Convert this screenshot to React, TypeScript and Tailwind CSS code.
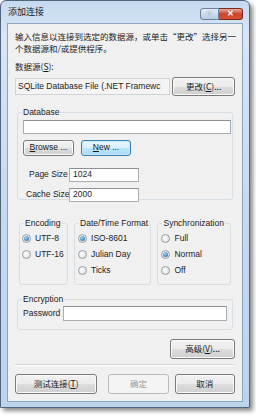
import type { ReactNode } from "react";

const CN = { fontFamily: '"Noto Sans CJK SC", "Liberation Sans", sans-serif' };
const UI = { fontFamily: '"Liberation Sans", "Noto Sans", sans-serif' };

function Btn({
  children,
  className = "",
  focused = false,
  disabled = false,
}: {
  children: ReactNode;
  className?: string;
  focused?: boolean;
  disabled?: boolean;
}) {
  const look = disabled
    ? "border-[#b8bcbf] bg-[#f4f4f4] text-[#9a9a9a]"
    : focused
      ? "border-[#3c7fb1] bg-[linear-gradient(#eaf6fd_0%,#d9f0fc_50%,#bee6fd_51%,#a7d9f5_100%)] text-[#1a1a1a] shadow-[inset_0_0_0_1px_#c9e8fb]"
      : "border-[#7a7a7a] bg-[linear-gradient(#f2f2f2_0%,#ebebeb_50%,#dddddd_51%,#cfcfcf_100%)] text-[#1a1a1a] shadow-[inset_0_0_0_1px_#fbfbfb]";
  return (
    <div
      className={`flex items-center justify-center whitespace-nowrap rounded-[3px] border text-[8.5px] ${look} ${className}`}
    >
      {children}
    </div>
  );
}

function Field({ className = "", children }: { className?: string; children?: ReactNode }) {
  return (
    <div
      className={`flex items-center border border-[#abadb3] border-t-[#8e9096] bg-white px-[3px] text-[8.5px] text-[#222] ${className}`}
    >
      {children}
    </div>
  );
}

function Group({
  title,
  className = "",
  children,
}: {
  title: string;
  className?: string;
  children: ReactNode;
}) {
  return (
    <div className={`relative rounded-[3px] border border-[#d5dfe5] ${className}`}>
      <span className="absolute -top-[7px] left-[4px] whitespace-nowrap bg-[#f0f0f0] px-[1px] text-[8.5px] leading-[12px] text-[#222]">
        {title}
      </span>
      {children}
    </div>
  );
}

function Radio({ label, checked = false }: { label: string; checked?: boolean }) {
  return (
    <div className="flex h-[16px] items-center gap-[4px] whitespace-nowrap text-[8.5px] text-[#222]">
      <div className="flex h-[9px] w-[9px] shrink-0 items-center justify-center rounded-full border border-[#9a9ea3] bg-[radial-gradient(circle_at_40%_40%,#ffffff,#d4d6d9)]">
        {checked && (
          <div className="h-[5px] w-[5px] rounded-full bg-[radial-gradient(circle_at_40%_35%,#9fd6f8,#1c5c9a)]" />
        )}
      </div>
      <span>{label}</span>
    </div>
  );
}

export default function App() {
  return (
    <div className="h-[415px] w-[256px] bg-white" style={UI}>
      <div className="flex h-[408px] w-[250px] flex-col rounded-t-[6px] border border-[#51647d] bg-[linear-gradient(#c5d9ef_0%,#d8e6f5_8%,#c9dcf0_40%,#bcd3ec_100%)] px-[6px] pb-[5px] shadow-[3px_3px_4px_rgba(0,0,0,0.45)]">
        {/* title bar */}
        <div className="flex h-[22px] items-start justify-between">
          <span className="pl-[1px] pt-[6px] text-[9px] leading-[10px] text-[#1b1b1b]" style={CN}>
            添加连接
          </span>
          <div className="flex pt-[7px]">
            <div className="flex h-[12px] w-[19px] items-center justify-center rounded-l-[3px] border border-[#6d7f99] bg-[linear-gradient(#e3ecf6,#b7cbe3)] text-[8px] font-bold leading-none text-[#eef3f9] [text-shadow:0_0_1px_#3d5676]">
              ?
            </div>
            <div className="flex h-[12px] w-[24px] items-center justify-center rounded-r-[3px] border border-l-0 border-[#7b2a22] bg-[linear-gradient(#eaa99c,#c9452f_50%,#d9502f)] text-[8px] font-bold leading-none text-white">
              ✕
            </div>
          </div>
        </div>

        {/* client area */}
        <div className="flex flex-1 flex-col border border-[#8da3bf] bg-[#f0f0f0] px-[7px] pt-[6px]">
          <p className="whitespace-nowrap text-[8.5px] leading-[12px] text-[#1b1b1b]" style={CN}>
            输入信息以连接到选定的数据源，或单击“更改”选择另一
            <br />
            个数据源和/或提供程序。
          </p>
          <div className="mt-[6px] text-[8.5px] text-[#1b1b1b]" style={CN}>
            数据源(<u>S</u>):
          </div>
          <div className="mt-[4px] flex items-center gap-[2px]">
            <div className="flex h-[17px] w-[156px] items-center overflow-hidden whitespace-nowrap border border-[#d0d3d7] bg-[#f4f4f4] px-[2px] text-[8.5px] text-[#222]">
              SQLite Database File (.NET Framewc
            </div>
            <Btn className="h-[19px] w-[63px]">
              <span style={CN}>
                更改(<u>C</u>)...
              </span>
            </Btn>
          </div>

          {/* Database group */}
          <Group title="Database" className="mx-[2px] mt-[16px] h-[88px] px-[5px] pt-[7px]">
            <Field className="h-[14px] w-[208px]" />
            <div className="mt-[6px] flex gap-[7px]">
              <Btn className="h-[16px] w-[51px]">
                <span>
                  <u>B</u>rowse ...
                </span>
              </Btn>
              <Btn className="h-[16px] w-[50px]" focused>
                <span>
                  <u>N</u>ew ...
                </span>
              </Btn>
            </div>
            <div className="mt-[12px] flex items-center">
              <span className="w-[46px] whitespace-nowrap pl-[6px] text-[8.5px] text-[#222]">Page Size</span>
              <Field className="h-[14px] w-[70px]">1024</Field>
            </div>
            <div className="mt-[6px] flex items-center">
              <span className="w-[46px] whitespace-nowrap pl-[3px] text-[8.5px] text-[#222]">Cache Size</span>
              <Field className="h-[14px] w-[70px]">2000</Field>
            </div>
          </Group>

          {/* option groups */}
          <div className="mt-[23px] flex gap-[6px] px-[4px]">
            <Group title="Encoding" className="h-[62px] w-[50px] pl-[2px] pt-[7px]">
              <Radio label="UTF-8" checked />
              <Radio label="UTF-16" />
            </Group>
            <Group title="Date/Time Format" className="h-[62px] w-[79px] pl-[3px] pt-[7px]">
              <Radio label="ISO-8601" checked />
              <Radio label="Julian Day" />
              <Radio label="Ticks" />
            </Group>
            <Group title="Synchronization" className="h-[62px] w-[75px] pl-[3px] pt-[7px]">
              <Radio label="Full" />
              <Radio label="Normal" checked />
              <Radio label="Off" />
            </Group>
          </div>

          {/* Encryption */}
          <Group title="Encryption" className="mx-[2px] mt-[14px] h-[31px] px-[5px] pt-[6px]">
            <div className="flex items-center">
              <span className="w-[41px] text-[8.5px] text-[#222]">Password</span>
              <Field className="h-[15px] w-[167px]" />
            </div>
          </Group>

          <div className="mt-[9px] flex justify-end">
            <Btn className="h-[20px] w-[65px]">
              <span style={CN}>
                高级(<u>V</u>)...
              </span>
            </Btn>
          </div>

          <div className="mt-[5px] border-b border-t border-b-white border-t-[#d5d5d5]" />

          <div className="mt-[8px] flex items-center">
            <Btn className="h-[20px] w-[83px]">
              <span style={CN}>
                测试连接(<u>T</u>)
              </span>
            </Btn>
            <Btn className="ml-[11px] h-[20px] w-[61px]" disabled>
              <span style={CN}>确定</span>
            </Btn>
            <Btn className="ml-[6px] h-[20px] w-[61px]">
              <span style={CN}>取消</span>
            </Btn>
          </div>
        </div>
      </div>
    </div>
  );
}
